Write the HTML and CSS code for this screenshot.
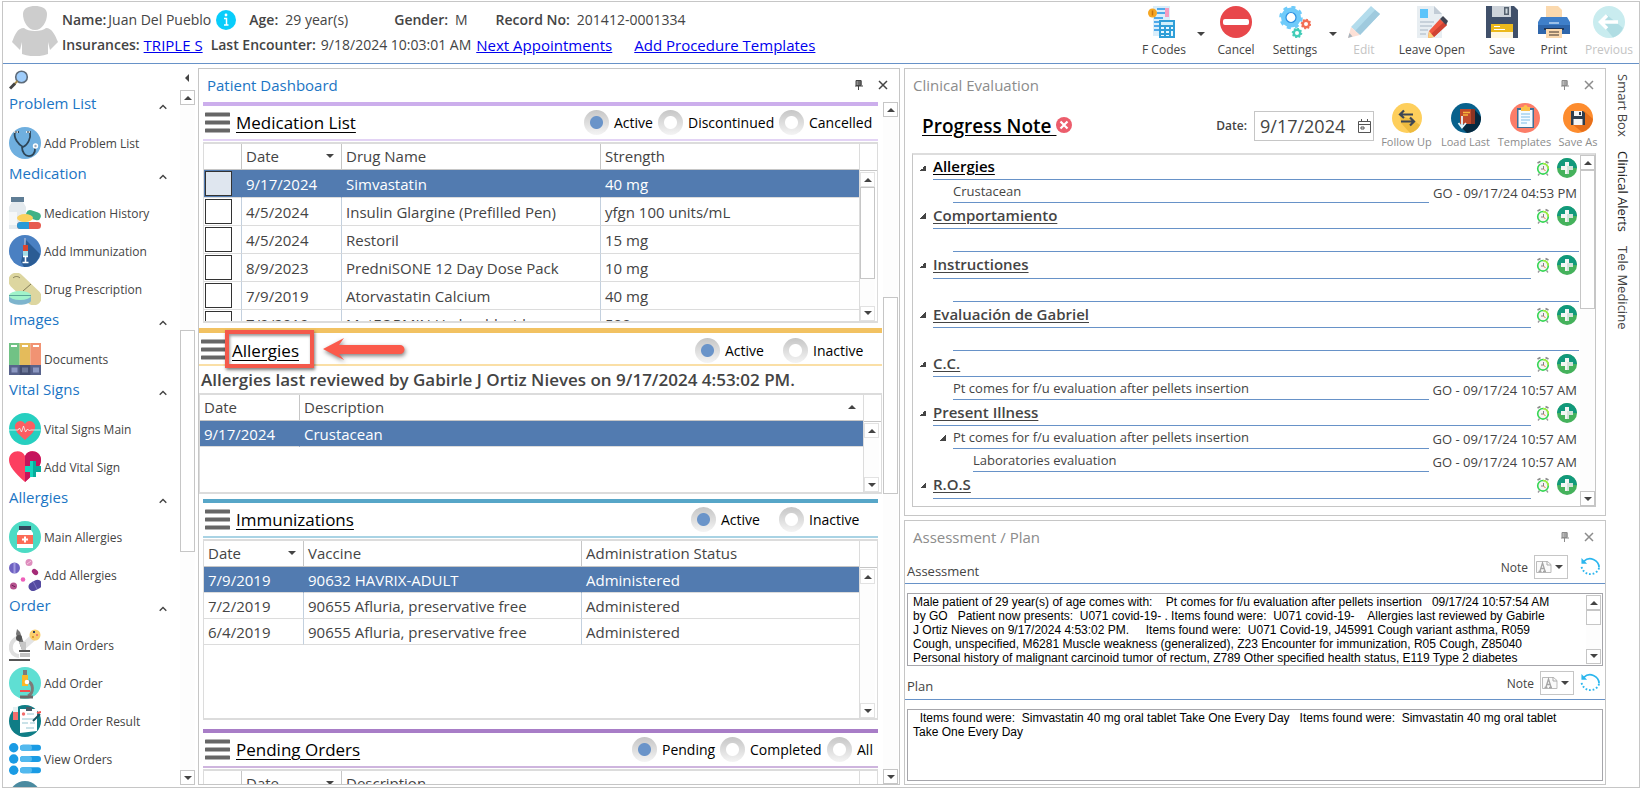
FILE: index.html
```html
<!DOCTYPE html>
<html lang="en">
<head>
    <meta charset="UTF-8">
    <meta name="viewport" content="width=device-width, initial-scale=1.0">
    <title>Patient Dashboard</title>
    <link rel="stylesheet" href="styles.css">
</head>
<body>
    <!-- shared icons -->
    <svg class="sprite" aria-hidden="true">
        <symbol id="i-menu" viewBox="0 0 25 22">
            <path d="M1 2.500h23M1 10.500h23M1 18.500h23" stroke="#666" stroke-width="4" stroke-linecap="round"/>
        </symbol>
        <symbol id="i-pin" viewBox="0 0 10 10">
            <path d="M2 .5h5v5H2zM5 .5h2v5H5zM1 6h8M4.500 6v4" fill="currentColor" fill-opacity=".6" stroke="currentColor"/>
        </symbol>
        <symbol id="i-close" viewBox="0 0 10 10">
            <path d="M1 1l8 8M9 1l-8 8" stroke="currentColor" stroke-width="1.500"/>
        </symbol>
        <symbol id="i-clock" viewBox="0 0 14 16">
            <path d="M1.500 3l3-1.500M12.500 3l-3-1.500" stroke="#8a8a8a" stroke-width="1.800"/>
            <path d="M3.500 13.500l-1.500 2M10.500 13.500l1.500 2" stroke="#999" stroke-width="1.300"/>
            <circle cx="7" cy="8.800" r="5.300" fill="#f6f4f4" stroke="#35d653" stroke-width="1.600"/>
            <path d="M7 3.500a5.300 5.300 0 0 1 5.300 5.300" fill="none" stroke="#a5ec3c" stroke-width="1.600"/>
            <path d="M7.500 6v3H5" fill="none" stroke="#777" stroke-width=".9"/>
            <path d="M7.500 9l2 2" stroke="#e87b3c"/>
        </symbol>
        <symbol id="i-plus" viewBox="0 0 20 20">
            <circle cx="10" cy="10" r="10" fill="#45b25c"/>
            <path d="M0 10a10 10 0 0 1 20 0z" fill="#12997c"/>
            <path d="M8 4h4v4h4v4h-4v4H8v-4H4V8h4z" fill="#f3f6f4"/>
            <path d="M12 8h4v4h-4v4h-2V8z" fill="#d3e3da"/>
        </symbol>
        <symbol id="i-refresh" viewBox="0 0 22 22">
            <path d="M4 5a9.500 9.500 0 0 1 16 6.500" fill="none" stroke="#2bb6ee" stroke-width="1.800"/>
            <path d="M20 12a9.500 9.500 0 0 1-18.500-3" fill="none" stroke="#2bb6ee" stroke-width="2" stroke-dasharray="1.800 2"/>
            <path d="M1.500 1.500v6h6z" fill="#2bb6ee"/>
        </symbol>
        <symbol id="i-font" viewBox="0 0 16 14">
            <path d="M.5 1.500h11l3.500 3v8H.5z" fill="#fafafa" stroke="#bbb"/>
            <path d="M11 1v4h4" fill="none" stroke="#aaa"/>
            <path d="M2.500 11.500h3M7 11.500h3M4 11l2.500-8L9 11M4.800 8.500h3.400" fill="none" stroke="#a5a5a5" stroke-width="1.300"/>
        </symbol>
        <symbol id="i-chevron" viewBox="0 0 8 6">
            <path d="M.7 4.800L4 1.500l3.300 3.300" fill="none" stroke="#444" stroke-width="1.400"/>
        </symbol>
    </svg>

    <div class="app">
        <header class="topbar">
            <svg class="avatar" viewBox="0 0 46 50">
                <path d="M11 8C11 2 17 0 23 0s12 2 12 8c0 8-5 16-12 16S11 16 11 8z" fill="#cdcdcd"/>
                <path d="M0 36c3-7 5-14 12-14 4 4 18 4 22 0 6 0 9 7 12 14l-8 8-2-8v12c-8 3-18 3-26 0V36l-2 8z" fill="#cdcdcd"/>
            </svg>
            <div class="patient">
                <div class="patient-row">
                    <b>Name:</b><span class="name">Juan Del Pueblo</span>
                    <svg class="info" viewBox="0 0 20 20"><circle cx="10" cy="10" r="10" fill="#08cdfb"/><circle cx="10" cy="5" r="1.400" fill="#fff"/><path d="M8 8.500h2.500v6.500M8 15h4.500" fill="none" stroke="#fff" stroke-width="1.500"/></svg>
                    <b class="age">Age:</b><span class="value">29 year(s)</span>
                    <b class="gender">Gender:</b><span class="value">M</span>
                    <b class="record">Record No:</b><span class="value">201412-0001334</span>
                </div>
                <div class="patient-row">
                    <b>Insurances:</b><a class="insurance" href="#">TRIPLE S</a>
                    <b>Last Encounter:</b><span class="encounter">9/18/2024 10:03:01 AM</span>
                    <a class="next" href="#">Next Appointments</a><a href="#">Add Procedure Templates</a>
                </div>
            </div>
            <div class="toolbar">
                <button class="tool">
                    <svg viewBox="0 0 32 32"><path d="M5 0h17v30H5z" fill="#d9eefb"/><path d="M9 3h8M9 7h8M6 12h9M6 16h9M6 20h9M6 24h9" stroke="#4fa9ea" stroke-width="2"/><path d="M17 2h4v9h-4z" fill="#f59bc0"/><circle cx="4.500" cy="7" r="4.500" fill="#f5a623"/><path d="M4.500 4.500v5" stroke="#c9720a" stroke-width="1.500"/><path d="M11 14h16v18H11z" fill="#2f9fd8"/><path d="M13 16h12v3H13z" fill="#cfeffb"/><path d="M13 21h3v2h-3zM18 21h3v2h-3zM23 21h2v2h-2zM13 25h3v2h-3zM18 25h3v2h-3zM23 25h2v5h-2zM13 29h3v1h-3zM18 29h3v1h-3z" fill="#e8f8ff"/></svg>
                    F Codes
                </button>
                <button class="drop" aria-label="F Codes menu"><i class="tri down"></i></button>
                <button class="tool cancel">
                    <svg viewBox="0 0 32 32"><circle cx="16" cy="16" r="16" fill="#e8474b"/><rect x="3" y="13" width="26" height="6" rx="2" fill="#fff"/></svg>
                    Cancel
                </button>
                <button class="tool settings">
                    <svg viewBox="0 0 32 32"><circle cx="12" cy="11.500" r="7.500" fill="none" stroke="#6fcbfa" stroke-width="5"/><circle cx="12" cy="11.500" r="10.300" fill="none" stroke="#6fcbfa" stroke-width="3" stroke-dasharray="4 4.100"/><circle cx="12" cy="11.500" r="5" fill="none" stroke="#2b8fe0" stroke-width="1.200"/><circle cx="27" cy="18" r="3.200" fill="none" stroke="#f26e55" stroke-width="2.400"/><circle cx="27" cy="18" r="4.400" fill="none" stroke="#f26e55" stroke-width="1.800" stroke-dasharray="1.700 1.700"/><circle cx="18" cy="27" r="3.200" fill="none" stroke="#43cdb8" stroke-width="2.400"/><circle cx="18" cy="27" r="4.400" fill="none" stroke="#43cdb8" stroke-width="1.800" stroke-dasharray="1.700 1.700"/></svg>
                    Settings
                </button>
                <button class="drop" aria-label="Settings menu"><i class="tri down"></i></button>
                <button class="tool edit" disabled>
                    <svg viewBox="0 0 32 32"><path d="M23 0l9 8L12 29l-9-8z" fill="#b3dcec"/><path d="M27 4l5 4-20 21-5-4z" fill="#9fcade"/><path d="M3 21l9 8-12 3z" fill="#fce0d6"/><path d="M1.500 27l3 3.500-4.500 1.500z" fill="#a8b4bd"/></svg>
                    Edit
                </button>
                <button class="tool leave">
                    <svg viewBox="0 0 32 32"><path d="M1 0h17l8 8v24H1z" fill="#e8eef2"/><path d="M18 0l8 8h-8z" fill="#c2ccd6"/><path d="M4 3h8v9H4z" fill="#5cc4fa"/><path d="M4 16h14M4 20h12M4 24h8M4 28h6" stroke="#bcc7d2" stroke-width="1.500"/><path d="M24 13l7 6-13 12-6 1 1-7z" fill="#f0573f"/><path d="M28 16l3 3-13 12-3-3z" fill="#cf4232"/><path d="M27 10l5 5-2 4-6-6z" fill="#3f4452"/><path d="M12 32l1-7 5 6z" fill="#fbd37c"/></svg>
                    Leave Open
                </button>
                <button class="tool save">
                    <svg viewBox="0 0 32 32"><path d="M0 0h28l4 4v28H0z" fill="#40506a"/><path d="M6 0h19v11H6z" fill="#cdd3da"/><path d="M18 1h5v8h-5z" fill="#55616f"/><path d="M19.500 2.500h2v5h-2z" fill="#cfd8df"/><path d="M5 18h22v8H5z" fill="#ecb91c"/><path d="M5 26h22v6H5z" fill="#fff7e0"/><path d="M8 20.500h6M8 23.500h11" stroke="#fff"/></svg>
                    Save
                </button>
                <button class="tool print">
                    <svg viewBox="0 0 32 32"><path d="M8 0h12l4 4v9H8z" fill="#fbd9ae"/><path d="M3 11h26l3 5v12H0V16z" fill="#3f7fc9"/><path d="M0 19h32v9H0z" fill="#2f66ab"/><path d="M11 17h10" stroke="#bcd6f2" stroke-width="1.500"/><path d="M6 22h20v2H6z" fill="#1f3658"/><path d="M8 23h16v9H8z" fill="#fbd9ae"/><path d="M11 26h10M11 29h10" stroke="#7d6a58" stroke-width="1.300"/></svg>
                    Print
                </button>
                <button class="tool previous" disabled>
                    <svg viewBox="0 0 32 32"><circle cx="16" cy="16" r="16" fill="#c9ecef"/><path d="M14 9l16 13a16 16 0 0 1-10 9.500L9 18z" fill="#b0dde3"/><path d="M25 16H8M14 9.500L7.500 16l6.500 6.500" fill="none" stroke="#fff" stroke-width="3.500"/></svg>
                    Previous
                </button>
            </div>
        </header>

        <main class="workspace">
            <aside class="sidebar">
                <nav class="menu">
                    <button class="search" aria-label="Search">
                        <svg viewBox="0 0 20 20"><circle cx="12.500" cy="7" r="5.800" fill="#9fcdfb" stroke="#5d6b7a" stroke-width="1.600"/><path d="M8.500 11l-3 3" stroke="#a58a4a" stroke-width="2"/><path d="M6 13.500l-5 5" stroke="#444" stroke-width="3"/></svg>
                    </button>
                    <h2>Problem List <svg><use href="#i-chevron"/></svg></h2>
                    <a href="#"><svg viewBox="0 0 32 32"><circle cx="16" cy="16" r="16" fill="#6fafdf"/><path d="M10 5H6c-2 6 4 13 8 15 5-2 8-9 7-15h-3M13 20c0 12 14 12 13 1" fill="none" stroke="#2d4557" stroke-width="1.800"/><path d="M5 5h4M17 5h4" stroke="#fff" stroke-width="1.500" stroke-dasharray="1.500 1"/><circle cx="26.500" cy="19" r="2.700" fill="#fff"/><circle cx="26.500" cy="19" r="1.200" fill="#9ab"/></svg>Add Problem List</a>
                    <h2>Medication <svg><use href="#i-chevron"/></svg></h2>
                    <a href="#"><svg viewBox="0 0 32 32"><path d="M2 0h13v5H2z" fill="#5f7d95"/><path d="M3 5h11l3 5v22H0V10z" fill="#e4eaee"/><path d="M0 15h8v13H0z" fill="#f5f7f8"/><rect x="17" y="14" width="15" height="8" rx="4" transform="rotate(18 24 18)" fill="#3fb286"/><ellipse cx="16" cy="21" rx="8" ry="4" fill="#fbd15d"/><rect x="8" y="25" width="24" height="7" rx="3.500" fill="#e75b4f"/><path d="M11.500 25H20v7h-8.500a3.500 3.500 0 0 1 0-7z" fill="#2899d6"/></svg>Medication History</a>
                    <a href="#"><svg viewBox="0 0 32 32"><circle cx="16" cy="16" r="16" fill="#4a80c2"/><path d="M17 5l14 14a16 16 0 0 1-16 13l-3-5z" fill="#2b5c94"/><path d="M16 3v8" stroke="#ccd" stroke-width="1"/><path d="M14 10h5v6h-5z" fill="#d9452f"/><path d="M14 16h5v5h-5z" fill="#a4dce6"/><path d="M16.500 21v6M14 21.500h5M13.500 27.500h6" stroke="#fff" stroke-width="1.600"/></svg>Add Immunization</a>
                    <a href="#"><svg viewBox="0 0 32 32"><rect x="-4" y="8" width="40" height="16" rx="8" transform="rotate(44 16 16)" fill="#ddd6a0"/><path d="M14 18l8-7M4 5c2-2 5-2 7 0" fill="none" stroke="#7f7956"/><path d="M0 22h22v6c-3 5-19 5-22 0z" fill="#7db4cd"/><ellipse cx="11" cy="22.500" rx="11" ry="4.500" fill="#a0f3ca"/><path d="M0 22.500h22" stroke="#5aa698"/></svg>Drug Prescription</a>
                    <h2>Images <svg><use href="#i-chevron"/></svg></h2>
                    <a href="#"><svg viewBox="0 0 32 32"><path d="M0 0h10.700v22H0z" fill="#71c285"/><path d="M10.700 0h10.600v22H10.700z" fill="#e4bb5b"/><path d="M21.300 0H32v22H21.300z" fill="#f19373"/><path d="M0 22h32v10H0z" fill="#58638c"/><path d="M10.700 22h10.600v10H10.700z" fill="#454f70"/><path d="M2 3h6M13 3h6M24 3h6" stroke="#fff" stroke-width="2"/><path d="M2.500 24.500h6v5h-6zM24 24.500h6v5h-6z" fill="#8c98c2"/><path d="M13 24.500h6v5h-6z" fill="#6b7696"/></svg>Documents</a>
                    <h2>Vital Signs <svg><use href="#i-chevron"/></svg></h2>
                    <a href="#"><svg viewBox="0 0 32 32"><circle cx="16" cy="16" r="16" fill="#27cfc0"/><path d="M16 27C9 21 5 17 6 12c2-5 8-5 10-1 2-4 8-4 10 1 1 5-3 9-10 15z" fill="#fd5d61"/><path d="M0 17h9l1.500-2 2 4 2-6 2 6 2-3 2 2 1-1h10" fill="none" stroke="#e7fffb" stroke-width=".8"/></svg>Vital Signs Main</a>
                    <a href="#"><svg viewBox="0 0 32 32"><path d="M16 31C5 21 0 15 0 9c0-9 12-12 16-4 4-8 16-5 16 4 0 6-5 12-16 22z" fill="#fc3f60"/><path d="M16 31V5c4-8 16-5 16 4 0 6-5 12-16 22z" fill="#c5145c"/><path d="M21 10h6v5h5v6h-5v5h-6v-5h-5v-6h5z" fill="#16d6bd"/><path d="M24 10h3v5h5v6h-5v5h-3z" fill="#08ab9c"/></svg>Add Vital Sign</a>
                    <h2>Allergies <svg><use href="#i-chevron"/></svg></h2>
                    <a href="#"><svg viewBox="0 0 32 32"><circle cx="16" cy="16" r="16" fill="#4cdbc4"/><path d="M10 5h12v4H10z" fill="#33475c"/><path d="M10 9h12l2 3v15H8V12z" fill="#fff"/><path d="M8 14h16v9H8z" fill="#fc6b57"/><path d="M16 15.500v6M13 18.500h6" stroke="#fff" stroke-width="2"/></svg>Main Allergies</a>
                    <a href="#"><svg viewBox="0 0 32 32"><circle cx="5.500" cy="9" r="5.500" fill="#6f62c2"/><path d="M5.500 4v10" stroke="#a39ae0" stroke-width="2"/><circle cx="20" cy="3.500" r="3.500" fill="#de8dbd"/><path d="M18 5l4-3" stroke="#f3c6df"/><ellipse cx="26" cy="13" rx="3.500" ry="2.500" transform="rotate(40 26 13)" fill="#a52b78"/><circle cx="14" cy="20.500" r="2.300" fill="#ef5fba"/><circle cx="4.500" cy="27" r="3.500" fill="#b6528f"/><path d="M2.500 26l4 2" stroke="#6e2357"/><rect x="19" y="22" width="14" height="9" rx="4.500" transform="rotate(-28 26 26)" fill="#544aa0"/><path d="M24 22l4 8" stroke="#7e75c5"/></svg>Add Allergies</a>
                    <h2>Order <svg><use href="#i-chevron"/></svg></h2>
                    <a href="#"><svg viewBox="0 0 32 32"><path d="M25 3l4 6-15 13-3-6z" fill="#e4e4e4"/><circle cx="26" cy="6" r="5.500" fill="#fbcf6d"/><path d="M24 2h2v2h-2z" fill="#34415c"/><circle cx="28" cy="6" r="1" fill="#e66"/><circle cx="24" cy="8" r="1" fill="#d58b22"/><path d="M8 9c-9 5-8 17 2 18" fill="none" stroke="#dedede" stroke-width="4"/><path d="M8 0l3 3 6 17-4 1L7 5z" fill="#777"/><circle cx="10" cy="9" r="3" fill="#555"/><path d="M10 13h7v8h-4z" fill="#c6c6c6"/><path d="M10 22h11" stroke="#555" stroke-width="2"/><path d="M11 24h10v4H11z" fill="#c3c3c3"/><path d="M0 31h21" stroke="#555" stroke-width="2"/></svg>Main Orders</a>
                    <a href="#"><svg viewBox="0 0 32 32"><circle cx="16" cy="16" r="16" fill="#5fdfd3"/><path d="M14 3h4v6h-4z" fill="#7b7b7b"/><path d="M13 8h6v11h-6z" fill="#fbb829"/><path d="M18 14c7 2 7 12 1 15" fill="none" stroke="#7f7a78" stroke-width="3"/><circle cx="18" cy="15" r="2.300" fill="#fff"/><path d="M11 24h10" stroke="#ef4f4f" stroke-width="2"/><path d="M11 30h13" stroke="#6b6b6b" stroke-width="3"/></svg>Add Order</a>
                    <a href="#"><svg viewBox="0 0 32 32"><circle cx="16" cy="16" r="16" fill="#0f7d86"/><path d="M4 3h5v12H4z" fill="#f36d6d"/><path d="M4 2h5v5H4z" fill="#e4f0f2"/><path d="M11 4h17v22l-17 2z" fill="#fff"/><path d="M17 2h6v4h-6z" fill="#4a5b66"/><circle cx="14.500" cy="9" r="1.700" fill="#f36d6d"/><path d="M18 9h7M13 14h12M13 18h6M21 18h5M17 23h8" stroke="#b9d9e1" stroke-width="1.500"/><path d="M31 9l-7 7" stroke="#1a5560" stroke-width="2"/><path d="M28 8l4-1" stroke="#e55" stroke-width="2"/></svg>Add Order Result</a>
                    <a href="#"><svg viewBox="0 0 32 32"><g fill="#1a9be4"><circle cx="4.700" cy="4.700" r="4.700"/><circle cx="4.700" cy="16" r="4.700"/><circle cx="4.700" cy="27.300" r="4.700"/></g><path d="M14 4.700h15M14 16h15M14 27.300h15" stroke="#1a9be4" stroke-width="6" stroke-linecap="round"/><path d="M14 4.700h6M14 16h6M14 27.300h6" stroke="#52b9ee" stroke-width="6" stroke-linecap="round"/></svg>View Orders</a>
                    <a href="#" aria-label="More orders"><svg viewBox="0 0 32 32"><circle cx="16" cy="16" r="16" fill="#4a8aa0"/></svg></a>
                </nav>
                <div class="rail">
                    <button class="collapse" aria-label="Collapse"><i class="tri left"></i></button>
                    <div class="scrollbar scroll-menu"><button aria-label="Scroll up"><i class="tri up"></i></button><span class="thumb"></span><button class="end" aria-label="Scroll down"><i class="tri down"></i></button></div>
                </div>
            </aside>

            <section class="panel dashboard">
                <div class="panel-title">
                    <h1>Patient Dashboard</h1>
                    <button aria-label="Pin"><svg><use href="#i-pin"/></svg></button>
                    <button aria-label="Close"><svg><use href="#i-close"/></svg></button>
                </div>
                <div class="dash-body">
                    <div class="widgets">
                        <section class="widget medication">
                            <div class="widget-head">
                                <svg class="bars"><use href="#i-menu"/></svg>
                                <a class="widget-link" href="#">Medication List</a>
                                <div class="choices">
                                    <label><input type="radio" name="med" checked>Active</label>
                                    <label><input type="radio" name="med">Discontinued</label>
                                    <label><input type="radio" name="med">Cancelled</label>
                                </div>
                            </div>
                            <div class="grid tall">
                                <table>
                                    <colgroup><col class="w-check"><col class="w-date"><col class="w-drug"><col></colgroup>
                                    <thead><tr><th></th><th>Date<i class="tri down"></i></th><th>Drug Name</th><th>Strength</th></tr></thead>
                                    <tbody>
                                        <tr class="selected"><td class="tick"><input type="checkbox" aria-label="Simvastatin"></td><td>9/17/2024</td><td>Simvastatin</td><td>40 mg</td></tr>
                                        <tr><td class="tick"><input type="checkbox" aria-label="Insulin Glargine"></td><td>4/5/2024</td><td>Insulin Glargine (Prefilled Pen)</td><td>yfgn 100 units/mL</td></tr>
                                        <tr><td class="tick"><input type="checkbox" aria-label="Restoril"></td><td>4/5/2024</td><td>Restoril</td><td>15 mg</td></tr>
                                        <tr><td class="tick"><input type="checkbox" aria-label="PredniSONE"></td><td>8/9/2023</td><td>PredniSONE 12 Day Dose Pack</td><td>10 mg</td></tr>
                                        <tr><td class="tick"><input type="checkbox" aria-label="Atorvastatin"></td><td>7/9/2019</td><td>Atorvastatin Calcium</td><td>40 mg</td></tr>
                                        <tr><td class="tick"><input type="checkbox" aria-label="MetFORMIN"></td><td>7/9/2019</td><td>MetFORMIN Hydrochloride</td><td>500 mg</td></tr>
                                    </tbody>
                                </table>
                                <div class="grid-scroll"><div class="scrollbar scroll-med"><button aria-label="Scroll up"><i class="tri up"></i></button><span class="thumb"></span><button class="end" aria-label="Scroll down"><i class="tri down"></i></button></div></div>
                            </div>
                        </section>

                        <section class="widget allergies">
                            <div class="widget-head">
                                <svg class="bars"><use href="#i-menu"/></svg>
                                <a class="widget-link" href="#">Allergies</a>
                                <div class="choices">
                                    <label><input type="radio" name="allergy" checked>Active</label>
                                    <label><input type="radio" name="allergy">Inactive</label>
                                </div>
                                <div class="callout"></div>
                                <svg class="callout-arrow" viewBox="0 0 82 24"><path d="M0 11L21 0l-5 7h61a4 4 0 0 1 0 9H16l5 6z" fill="#fb5a4b"/></svg>
                            </div>
                            <p class="reviewed">Allergies last reviewed by Gabirle J Ortiz Nieves on 9/17/2024 4:53:02 PM.</p>
                            <div class="grid short">
                                <table>
                                    <colgroup><col class="w-date"><col></colgroup>
                                    <thead><tr><th>Date</th><th>Description<i class="tri up"></i></th></tr></thead>
                                    <tbody><tr class="selected"><td>9/17/2024</td><td>Crustacean</td></tr></tbody>
                                </table>
                                <div class="grid-scroll"><div class="scrollbar"><button aria-label="Scroll up"><i class="tri up"></i></button><button class="end" aria-label="Scroll down"><i class="tri down"></i></button></div></div>
                            </div>
                        </section>

                        <section class="widget immunizations">
                            <div class="widget-head">
                                <svg class="bars"><use href="#i-menu"/></svg>
                                <a class="widget-link" href="#">Immunizations</a>
                                <div class="choices">
                                    <label><input type="radio" name="imm" checked>Active</label>
                                    <label><input type="radio" name="imm">Inactive</label>
                                </div>
                            </div>
                            <div class="grid tall">
                                <table>
                                    <colgroup><col class="w-date"><col class="w-vaccine"><col></colgroup>
                                    <thead><tr><th>Date<i class="tri down"></i></th><th>Vaccine</th><th>Administration Status</th></tr></thead>
                                    <tbody>
                                        <tr class="selected"><td>7/9/2019</td><td>90632 HAVRIX-ADULT</td><td>Administered</td></tr>
                                        <tr><td>7/2/2019</td><td>90655 Afluria, preservative free</td><td>Administered</td></tr>
                                        <tr><td>6/4/2019</td><td>90655 Afluria, preservative free</td><td>Administered</td></tr>
                                    </tbody>
                                </table>
                                <div class="grid-scroll"><div class="scrollbar"><button aria-label="Scroll up"><i class="tri up"></i></button><button class="end" aria-label="Scroll down"><i class="tri down"></i></button></div></div>
                            </div>
                        </section>

                        <section class="widget orders">
                            <div class="widget-head">
                                <svg class="bars"><use href="#i-menu"/></svg>
                                <a class="widget-link" href="#">Pending Orders</a>
                                <div class="choices">
                                    <label><input type="radio" name="ord" checked>Pending</label>
                                    <label><input type="radio" name="ord">Completed</label>
                                    <label><input type="radio" name="ord">All</label>
                                </div>
                            </div>
                            <div class="grid tall">
                                <table>
                                    <colgroup><col class="w-check"><col class="w-date"><col></colgroup>
                                    <thead><tr><th></th><th>Date<i class="tri down"></i></th><th>Description</th></tr></thead>
                                </table>
                                <div class="grid-scroll"></div>
                            </div>
                        </section>
                    </div>
                    <div class="scrollbar scroll-dash"><button aria-label="Scroll up"><i class="tri up"></i></button><span class="thumb"></span><button class="end" aria-label="Scroll down"><i class="tri down"></i></button></div>
                </div>
            </section>

            <div class="right">
                <section class="panel clinical">
                    <div class="panel-title">
                        <h1>Clinical Evaluation</h1>
                        <button aria-label="Pin"><svg><use href="#i-pin"/></svg></button>
                        <button aria-label="Close"><svg><use href="#i-close"/></svg></button>
                    </div>
                    <div class="note-bar">
                        <a class="note-name" href="#">Progress Note&nbsp;</a>
                        <svg class="remove" viewBox="0 0 16 16"><circle cx="8" cy="8" r="8" fill="#ec5d6c"/><path d="M4.500 4.500l7 7M11.500 4.500l-7 7" stroke="#fff" stroke-width="2.200"/></svg>
                        <label class="date-label" for="note-date">Date:</label>
                        <div class="date-box">
                            <input id="note-date" type="text" value="9/17/2024">
                            <svg viewBox="0 0 13 14"><path d="M.5 2.500h12v11H.5zM.5 5.500h12M3.500 0v3M9.500 0v3" fill="none" stroke="#555"/><path d="M3 8h3v2H3z" fill="none" stroke="#555"/></svg>
                        </div>
                        <button class="note-tool follow">
                            <svg viewBox="0 0 30 30"><circle cx="15" cy="15" r="15" fill="#fecf5c"/><path d="M8 12l13 5 7 5a15 15 0 0 1-10 8l-9-10z" fill="#eebb3f"/><path d="M21 11.500H9M12 7.500l-4 4 4 3.500M9 18.500h12M18 14.500l4 4-4 4" fill="none" stroke="#3d4654" stroke-width="2.200"/></svg>
                            Follow Up
                        </button>
                        <button class="note-tool load">
                            <svg viewBox="0 0 30 30"><circle cx="15" cy="15" r="15" fill="#08618c"/><path d="M24 7l6 7a15 15 0 0 1-14 16l-6-6z" fill="#06293f"/><path d="M9 6h14v15H9z" fill="#bf4a2c"/><path d="M20 6h4v15h-4z" fill="#8b3423"/><path d="M12 9.500h7M12 12h5" stroke="#f7b53b" stroke-width="1.500"/><path d="M11 13v11M7.500 20l3.500 4.500 4-4.500" fill="none" stroke="#e7f6fc" stroke-width="1.800"/></svg>
                            Load Last
                        </button>
                        <button class="note-tool templates">
                            <svg viewBox="0 0 30 30"><circle cx="15" cy="15" r="15" fill="#fc7d68"/><path d="M7 5h17v20H7z" fill="#3f6f96"/><path d="M8.500 7h14v17h-14z" fill="#f5fbff"/><path d="M11 4h9v4h-9z" fill="#fbc14b"/><circle cx="15.500" cy="4" r="2" fill="#fbc14b"/><path d="M11 11h9M11 14h9M11 17h9M11 20h6" stroke="#7ebde8" stroke-width="1.200"/></svg>
                            Templates
                        </button>
                        <button class="note-tool save-as">
                            <svg viewBox="0 0 30 30"><circle cx="15" cy="15" r="15" fill="#fd8c2e"/><path d="M21 8l9 8a15 15 0 0 1-11 13l-10-8z" fill="#e66f1b"/><path d="M8 8h12l2 2v12H8z" fill="#2e3d4e"/><path d="M11 8h8v5h-8zM10.500 16h9v6h-9z" fill="#f5f5f5"/><path d="M16 9h2v3h-2z" fill="#2e3d4e"/></svg>
                            Save As
                        </button>
                    </div>
                    <div class="note-box">
                        <ul class="note-list">
                            <li class="topic first"><i class="fold"></i><a href="#">Allergies</a><svg class="clock"><use href="#i-clock"/></svg><svg class="plus"><use href="#i-plus"/></svg></li>
                            <li class="entry"><span>Crustacean</span><time>GO - 09/17/24 04:53 PM</time></li>
                            <li class="topic"><i class="fold"></i><a href="#">Comportamiento</a><svg class="clock"><use href="#i-clock"/></svg><svg class="plus"><use href="#i-plus"/></svg></li>
                            <li class="entry"><span></span></li>
                            <li class="topic"><i class="fold"></i><a href="#">Instructiones</a><svg class="clock"><use href="#i-clock"/></svg><svg class="plus"><use href="#i-plus"/></svg></li>
                            <li class="entry"><span></span></li>
                            <li class="topic"><i class="fold"></i><a href="#">Evaluación de Gabriel</a><svg class="clock"><use href="#i-clock"/></svg><svg class="plus"><use href="#i-plus"/></svg></li>
                            <li class="entry"><span></span></li>
                            <li class="topic"><i class="fold"></i><a href="#">C.C.</a><svg class="clock"><use href="#i-clock"/></svg><svg class="plus"><use href="#i-plus"/></svg></li>
                            <li class="entry"><span>Pt comes for f/u evaluation after pellets insertion</span><time>GO - 09/17/24 10:57 AM</time></li>
                            <li class="topic"><i class="fold"></i><a href="#">Present Illness</a><svg class="clock"><use href="#i-clock"/></svg><svg class="plus"><use href="#i-plus"/></svg></li>
                            <li class="entry"><i class="fold"></i><span>Pt comes for f/u evaluation after pellets insertion</span><time>GO - 09/17/24 10:57 AM</time></li>
                            <li class="entry nested"><span>Laboratories evaluation</span><time>GO - 09/17/24 10:57 AM</time></li>
                            <li class="topic"><i class="fold"></i><a href="#">R.O.S</a><svg class="clock"><use href="#i-clock"/></svg><svg class="plus"><use href="#i-plus"/></svg></li>
                        </ul>
                        <div class="scrollbar scroll-note"><button aria-label="Scroll up"><i class="tri up"></i></button><span class="thumb"></span><button class="end" aria-label="Scroll down"><i class="tri down"></i></button></div>
                    </div>
                </section>

                <section class="panel assessment">
                    <div class="panel-title">
                        <h1>Assessment / Plan</h1>
                        <button aria-label="Pin"><svg><use href="#i-pin"/></svg></button>
                        <button aria-label="Close"><svg><use href="#i-close"/></svg></button>
                    </div>
                    <div class="field-head">
                        <label for="assessment">Assessment</label>
                        <span class="field-note">Note</span>
                        <button class="font-pick" aria-label="Note font"><svg><use href="#i-font"/></svg><i class="tri down"></i></button>
                        <button class="refresh" aria-label="Refresh assessment"><svg><use href="#i-refresh"/></svg></button>
                    </div>
                    <div class="field">
                        <textarea id="assessment" readonly>Male patient of 29 year(s) of age comes with:    Pt comes for f/u evaluation after pellets insertion   09/17/24 10:57:54 AM
by GO   Patient now presents:  U071 covid-19- . Items found were:  U071 covid-19-    Allergies last reviewed by Gabirle
J Ortiz Nieves on 9/17/2024 4:53:02 PM.     Items found were:  U071 Covid-19, J45991 Cough variant asthma, R059
Cough, unspecified, M6281 Muscle weakness (generalized), Z23 Encounter for immunization, R05 Cough, Z85040
Personal history of malignant carcinoid tumor of rectum, Z789 Other specified health status, E119 Type 2 diabetes</textarea>
                        <div class="scrollbar scroll-text"><button aria-label="Scroll up"><i class="tri up"></i></button><span class="thumb"></span><button class="end" aria-label="Scroll down"><i class="tri down"></i></button></div>
                    </div>
                    <div class="field-head plan-head">
                        <label for="plan">Plan</label>
                        <span class="field-note">Note</span>
                        <button class="font-pick" aria-label="Note font"><svg><use href="#i-font"/></svg><i class="tri down"></i></button>
                        <button class="refresh" aria-label="Refresh plan"><svg><use href="#i-refresh"/></svg></button>
                    </div>
                    <div class="field">
                        <textarea id="plan" readonly>  Items found were:  Simvastatin 40 mg oral tablet Take One Every Day   Items found were:  Simvastatin 40 mg oral tablet
Take One Every Day</textarea>
                    </div>
                </section>
            </div>

            <div class="side-tabs">
                <button>Smart Box</button>
                <button class="current">Clinical Alerts</button>
                <button>Tele Medicine</button>
            </div>
        </main>
    </div>
</body>
</html>
```
FILE: styles.css
```css
:root {
    --text: #444;
    --muted: #8c8c8c;
    --blue: #1b75c4;
    --line-blue: #6792c8;
    --row-blue: #527bb0;
    --frame: #c6c6c6;
    --grid-line: #dcdcdc;
}

* {
    box-sizing: border-box;
    margin: 0;
    padding: 0;
}

body {
    height: 100vh;
    padding: 1px 2px 3px;
    background: #fff;
    color: var(--text);
    font-family: "Open Sans", "Noto Sans", sans-serif;
    font-size: 14px;
    overflow: hidden;
}

button, input, textarea {
    font: inherit;
    color: inherit;
    border: none;
    background: none;
}

b {
    font-weight: 600;
}

a {
    color: inherit;
}

svg {
    display: block;
    flex: none;
}

.sprite {
    display: none;
}

.app {
    height: 100%;
    display: flex;
    flex-direction: column;
    border: 1px solid var(--frame);
    overflow: hidden;
}

/* small triangles */
.tri {
    display: block;
    width: 0;
    height: 0;
    border: 4px solid transparent;
}

.tri.up {
    border-top: none;
    border-bottom-color: #444;
}

.tri.down {
    border-bottom: none;
    border-top-color: #444;
}

.tri.left {
    border-left: none;
    border-right-color: #444;
}

/* header */
.topbar {
    height: 62px;
    flex: none;
    display: flex;
    border-bottom: 1px solid var(--line-blue);
}

.avatar {
    width: 46px;
    height: 50px;
    margin: 4px 4px 0 9px;
}

.patient {
    flex: 1;
    padding: 5px 0 0;
    white-space: nowrap;
}

.patient-row {
    display: flex;
    align-items: center;
    height: 25px;
}

.patient-row a {
    color: #00e;
    font-size: 15px;
}

.name {
    width: 106px;
    margin-left: 2px;
}

.info {
    width: 20px;
    height: 20px;
    margin: 0 13px 0 2px;
}

.value {
    margin-left: 7px;
}

.gender {
    margin-left: 46px;
}

.record {
    margin-left: 28px;
}

.patient-row .insurance {
    margin: 0 8px 0 4px;
}

.encounter {
    margin: 0 5px;
}

.next {
    margin-right: 22px;
}

.toolbar {
    display: flex;
    align-items: flex-start;
    padding-top: 4px;
}

.tool {
    width: 58px;
    display: flex;
    flex-direction: column;
    align-items: center;
    gap: 4px;
    font-size: 12px;
    line-height: 16px;
    white-space: nowrap;
}

.tool svg {
    width: 32px;
    height: 32px;
}

.tool:disabled {
    color: #c4c4c4;
}

.drop {
    width: 12px;
    height: 32px;
    padding: 24px 0 0 2px;
    margin-left: 2px;
}

.settings {
    width: 60px;
}

.edit {
    width: 50px;
}

.leave {
    width: 86px;
}

.save {
    width: 54px;
}

.print {
    width: 50px;
}

.previous {
    width: 60px;
}

/* page columns */
.workspace {
    flex: 1;
    min-height: 0;
    display: grid;
    grid-template-columns: 195px minmax(0, 1fr) 4px minmax(0, 1fr) 33px;
    grid-template-rows: minmax(0, 1fr);
}

.panel {
    border: 1px solid var(--frame);
    min-height: 0;
    display: flex;
    flex-direction: column;
}

.panel-title {
    display: flex;
    align-items: center;
    height: 33px;
    flex: none;
    padding: 0 11px 2px 8px;
    color: var(--muted);
}

.panel-title h1 {
    flex: 1;
    font-size: 15px;
    font-weight: 400;
}

.panel-title button {
    margin-left: 14px;
}

.panel-title svg {
    width: 10px;
    height: 10px;
}

/* scrollbars */
.scrollbar {
    width: 15px;
    display: grid;
    grid-template-rows: 15px 0fr 1fr 0fr 15px;
    background: #fdfdfd;
}

.scrollbar button {
    display: flex;
    align-items: center;
    justify-content: center;
    border: 1px solid var(--frame);
    background: #fff;
}

.scrollbar .end {
    grid-row: 5;
}

.thumb {
    grid-row: 3;
    border: 1px solid var(--frame);
    background: #fff;
}

.scroll-menu {
    flex: 1;
    grid-template-rows: 15px 225fr 222fr 218fr 15px;
}

.scroll-dash {
    grid-template-rows: 15px 180fr 196fr 275fr 15px;
}

.scroll-med {
    grid-template-rows: 15px 0fr 93fr 27fr 15px;
}

.scroll-note {
    grid-template-rows: 15px 0fr 138fr 182fr 15px;
}

.scroll-text {
    grid-template-rows: 15px 0fr 15fr 25fr 15px;
    margin: 1px;
}

/* left menu */
.sidebar {
    display: flex;
    overflow: hidden;
}

.menu {
    flex: 1;
    padding-left: 6px;
}

.search {
    display: block;
    height: 28px;
    padding-top: 3px;
}

.search svg {
    width: 20px;
    height: 20px;
}

.menu h2 {
    height: 32px;
    display: flex;
    justify-content: space-between;
    padding-right: 13px;
    color: var(--blue);
    font-size: 15px;
    font-weight: 400;
    line-height: 22px;
}

.menu h2 svg {
    width: 8px;
    height: 6px;
    margin-top: 12px;
}

.menu a {
    height: 38px;
    display: flex;
    align-items: center;
    gap: 3px;
    font-size: 12px;
    text-decoration: none;
    white-space: nowrap;
}

.menu a svg {
    width: 32px;
    height: 32px;
}

.rail {
    width: 18px;
    display: flex;
    flex-direction: column;
    padding-bottom: 2px;
}

.collapse {
    height: 26px;
    padding: 2px 0 0 5px;
}

/* patient dashboard */
.dashboard {
    margin-top: 4px;
    margin-bottom: 2px;
}

.dashboard h1 {
    color: var(--blue);
}

.dashboard .panel-title {
    color: #444;
}

.dash-body {
    flex: 1;
    min-height: 0;
    display: flex;
    padding-right: 1px;
}

.widgets {
    flex: 1;
    overflow: hidden;
}

.widget {
    margin: 0 5px 0 4px;
}

.widget-head {
    display: flex;
    align-items: center;
    height: 39px;
    padding-left: 2px;
    margin-bottom: 1px;
    border-top: 4px solid;
    border-bottom: 2px solid;
}

.bars {
    width: 25px;
    height: 22px;
    margin-right: 6px;
}

.widget-link {
    flex: 1;
    color: #000;
    font-size: 17px;
    text-underline-offset: 3px;
}

.choices {
    display: flex;
    color: #000;
}

.choices label {
    display: flex;
    align-items: center;
    gap: 5px;
    white-space: nowrap;
}

.choices input {
    appearance: none;
    width: 25px;
    height: 25px;
    flex: none;
    border-radius: 50%;
    background: radial-gradient(circle, #fff 6px, transparent 7px), linear-gradient(#c6c6c6, #f4f4f4);
}

.choices input:checked {
    background: radial-gradient(circle, #6a94c9 6px, transparent 7px), linear-gradient(#c6c6c6, #f4f4f4);
}

.medication .widget-head {
    border-top-color: #ccaeec;
    border-bottom-color: #e3d3f5;
}

.medication label:nth-child(1) {
    width: 74px;
}

.medication label:nth-child(2) {
    width: 121px;
}

.medication label:nth-child(3), .immunizations label:nth-child(2), .allergies label:nth-child(2) {
    width: 99px;
}

.allergies label:nth-child(1), .immunizations label:nth-child(1), .orders label:nth-child(1) {
    width: 88px;
}

.orders label:nth-child(2) {
    width: 107px;
}

.orders label:nth-child(3) {
    width: 51px;
}

.allergies {
    margin: 5px 1px 5px 0;
}

.allergies .widget-head {
    position: relative;
    height: 38px;
    padding-top: 3px;
    margin-bottom: 0;
    border-top: 5px solid #f2c262;
    border-bottom-color: #fadfa6;
}

.callout {
    position: absolute;
    left: 26px;
    top: -3px;
    width: 89px;
    height: 38px;
    border: 4px solid #f4594b;
    box-shadow: 1px 2px 3px rgba(0, 0, 0, 0.5), inset 1px 2px 3px rgba(0, 0, 0, 0.4);
}

.callout-arrow {
    position: absolute;
    left: 124px;
    top: 5px;
    width: 82px;
    height: 24px;
    filter: drop-shadow(1px 2px 2px rgba(0, 0, 0, 0.5));
}

.reviewed {
    padding-left: 2px;
    font-size: 17px;
    font-weight: 600;
    line-height: 27px;
    white-space: nowrap;
}

.immunizations .widget-head {
    border-top-color: #57a6c8;
    border-bottom-color: #a9d3e4;
}

.orders {
    margin-top: 9px;
}

.orders .widget-head {
    border-top-color: #a87dc7;
    border-bottom-color: #ceb5de;
}

/* data grids */
.grid {
    display: flex;
    border: 1px solid var(--grid-line);
    border-top-width: 2px;
    border-bottom-width: 2px;
    overflow: hidden;
}

.grid.tall {
    height: 181px;
}

.grid.short {
    height: 101px;
}

.grid table {
    flex: 1;
    width: 100%;
    align-self: flex-start;
    table-layout: fixed;
    border-collapse: separate;
    border-spacing: 0;
    font-size: 15px;
}

.grid th, .grid td {
    height: 26px;
    padding-left: 4px;
    border-left: 1px solid #c3d0de;
    border-bottom: 1px solid var(--grid-line);
    font-weight: 400;
    text-align: left;
    line-height: 20px;
    white-space: nowrap;
}

.grid th {
    padding-bottom: 2px;
    border-color: var(--frame);
}

.grid th:first-child, .grid td:first-child {
    border-left: none;
}

.grid th .tri {
    float: right;
    margin: 8px 7px 0 0;
}

.medication td {
    height: 28px;
}

.grid .selected td {
    background: var(--row-blue);
    border-left-color: var(--row-blue);
    color: #fff;
}

.grid .tick {
    padding: 0 0 0 1px;
}

.tick input {
    display: block;
    appearance: none;
    width: 27px;
    height: 25px;
    border: 1px solid #333;
    background: #fff;
}

.selected .tick input {
    background: #dfe6ef;
}

.w-check {
    width: 37px;
}

.w-date {
    width: 100px;
}

.immunizations .w-date, .allergies .w-date {
    width: 99px;
}

.w-drug {
    width: 259px;
}

.w-vaccine {
    width: 278px;
}

.grid-scroll {
    width: 18px;
    display: flex;
    flex-direction: column;
    border-left: 1px solid var(--grid-line);
}

.grid-scroll::before {
    content: "";
    height: 26px;
    flex: none;
    border-bottom: 1px solid var(--frame);
    margin-bottom: 1px;
}

.grid-scroll .scrollbar {
    flex: 1;
}

.grid-scroll .scrollbar button {
    border-color: #e2e2e2;
}

/* right column */
.right {
    grid-column: 4;
    display: flex;
    flex-direction: column;
    gap: 4px;
    margin: 4px 0 2px;
    min-height: 0;
}

.clinical {
    flex: 449 1 0;
}

.assessment {
    flex: 264 1 0;
}

.note-bar {
    display: flex;
    align-items: flex-start;
    height: 51px;
    flex: none;
    padding-left: 17px;
    padding-right: 3px;
}

.note-name {
    color: #000;
    font-size: 19px;
    font-weight: 600;
    line-height: 48px;
    text-underline-offset: 2px;
}

.remove {
    width: 16px;
    height: 16px;
    margin-top: 15px;
}

.date-label {
    margin-left: auto;
    font-size: 12px;
    font-weight: 600;
    line-height: 48px;
}

.date-box {
    width: 120px;
    height: 30px;
    display: flex;
    align-items: center;
    margin: 9px 0 0 7px;
    padding: 0 2px 0 5px;
    border: 1px solid var(--frame);
}

.date-box input {
    flex: 1;
    min-width: 0;
    font-size: 18px;
}

.date-box svg {
    width: 13px;
    height: 14px;
}

.note-tool {
    width: 59px;
    display: flex;
    flex-direction: column;
    align-items: center;
    gap: 1px;
    padding-top: 1px;
    color: var(--muted);
    font-size: 11px;
    line-height: 16px;
    white-space: nowrap;
}

.note-tool svg {
    width: 30px;
    height: 30px;
}

.note-tool.follow {
    margin-left: 3px;
}

.note-tool.save-as {
    width: 48px;
}

.note-box {
    flex: 1;
    min-height: 0;
    display: flex;
    margin: 0 9px 8px 7px;
    border: 1px solid var(--frame);
    border-top: 2px solid #ddd;
}

.note-list {
    flex: 1;
    display: flex;
    flex-direction: column;
    padding: 0 1px 8px 5px;
    list-style: none;
}

.note-list li {
    display: flex;
    align-items: stretch;
}

.topic {
    flex: 1;
}

.topic.first {
    flex: none;
    height: 25px;
}

.fold {
    width: 6px;
    height: 6px;
    flex: none;
    align-self: center;
    margin: 0 7px 0 2px;
    background: linear-gradient(135deg, transparent 50%, #444 50%);
}

.topic a {
    flex: 1;
    border-bottom: 1px solid var(--line-blue);
    font-size: 15px;
    font-weight: 600;
    line-height: 24px;
    text-underline-offset: 2px;
}

.topic.first a {
    color: #000;
    line-height: 22px;
}

.clock {
    width: 14px;
    height: 16px;
    align-self: center;
    margin: 0 7px 0 5px;
}

.plus {
    width: 20px;
    height: 20px;
    align-self: center;
    margin-right: 2px;
}

.entry {
    height: 23px;
    flex: none;
    padding-left: 35px;
    font-size: 13px;
    line-height: 22px;
}

.entry .fold {
    margin-left: -13px;
}

.entry.nested {
    padding-left: 55px;
}

.entry span {
    flex: 1;
    border-bottom: 1px solid var(--line-blue);
}

.entry time {
    width: 150px;
    padding-right: 2px;
    text-align: right;
    line-height: 26px;
    white-space: nowrap;
}

/* assessment and plan */
.field-head {
    display: flex;
    align-items: flex-start;
    height: 30px;
    flex: none;
    padding: 1px 4px 0 2px;
    border-bottom: 1px solid var(--line-blue);
}

.field-head label {
    flex: 1;
    font-size: 13px;
    line-height: 32px;
}

.field-note {
    margin-right: 6px;
    font-size: 12px;
    line-height: 26px;
}

.font-pick {
    width: 34px;
    height: 24px;
    display: flex;
    align-items: center;
    justify-content: space-between;
    padding: 0 4px 0 1px;
    border: 1px solid var(--frame);
}

.font-pick svg {
    width: 16px;
    height: 14px;
}

.refresh {
    margin-left: 12px;
    padding-top: 1px;
}

.refresh svg {
    width: 21px;
    height: 22px;
}

.plan-head {
    margin-top: 4px;
}

.plan-head .refresh {
    margin-left: 6px;
}

.plan-head label {
    line-height: 30px;
}

.field {
    flex: 1;
    min-height: 0;
    display: flex;
    margin: 9px 2px 0;
    border: 1px solid #a6a6ab;
}

.field:last-child {
    margin-bottom: 3px;
}

.field textarea {
    flex: 1;
    resize: none;
    padding: 1px 5px 0;
    color: #000;
    font: 12px/14px "Liberation Sans", Arial, sans-serif;
    white-space: pre;
    overflow: hidden;
}

/* vertical tabs */
.side-tabs {
    grid-column: 5;
    display: flex;
    flex-direction: column;
    align-items: center;
    gap: 14px;
    padding-top: 10px;
}

.side-tabs button {
    writing-mode: vertical-rl;
    font-size: 13px;
}

.side-tabs .current {
    color: #222;
}
```
